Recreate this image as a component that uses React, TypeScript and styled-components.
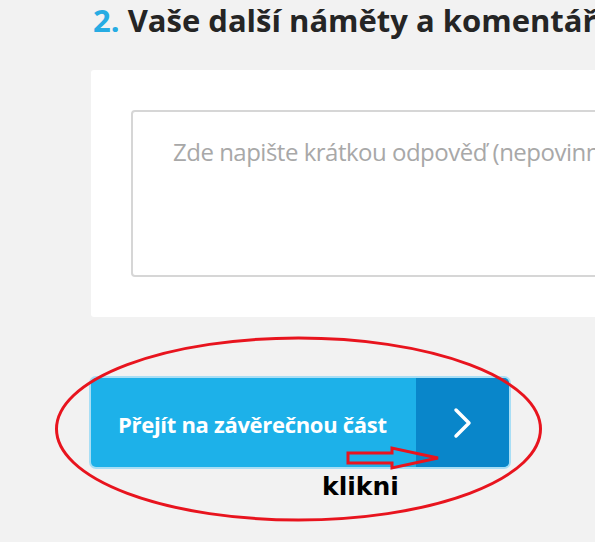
import React from "react";
import styled, { createGlobalStyle } from "styled-components";

const Global = createGlobalStyle`
  html, body { margin: 0; padding: 0; background: #f2f2f2; }
  body { overflow: hidden; }
`;

const Page = styled.div`
  position: relative;
  width: 595px;
  height: 542px;
  overflow: hidden;
  background: #f2f2f2;
  font-family: "Open Sans", "Noto Sans", sans-serif;
`;

const Content = styled.div`
  display: flex;
  flex-direction: column;
  align-items: flex-start;
  padding-left: 91px;
`;

const Heading = styled.h2`
  margin: 0 0 30px 2px;
  font-size: 31px;
  line-height: 40px;
  font-weight: 700;
  color: #252525;
  white-space: nowrap;
`;

const Num = styled.span`
  color: #27ace3;
`;

const Card = styled.div`
  box-sizing: border-box;
  width: 560px;
  height: 247px;
  padding: 40px;
  background: #ffffff;
  border-radius: 3px;
`;

const Answer = styled.textarea`
  box-sizing: border-box;
  display: block;
  width: 100%;
  height: 167px;
  padding: 24px 40px;
  border: 2px solid #d6d6d6;
  border-radius: 4px;
  resize: none;
  font-family: "Open Sans", "Noto Sans", sans-serif;
  font-size: 24px;
  line-height: 32px;
  letter-spacing: -0.5px;
  color: #333;
  outline: none;
  white-space: nowrap;
  overflow: hidden;
  &::placeholder {
    color: #a8a8a8;
  }
`;

const NextButton = styled.button`
  margin-top: 61px;
  display: flex;
  align-items: stretch;
  width: 418px;
  height: 89px;
  padding: 0;
  border: none;
  border-radius: 5px;
  overflow: hidden;
  background: #1db1e9;
  box-shadow: 0 0 0 2px #a8def5;
  cursor: pointer;
`;

const Label = styled.span`
  flex: 1;
  display: flex;
  align-items: center;
  padding-left: 27px;
  padding-top: 2px;
  font-family: "Open Sans", "Noto Sans", sans-serif;
  font-size: 22px;
  font-weight: 700;
  letter-spacing: -0.3px;
  color: #ffffff;
  white-space: nowrap;
`;

const IconBox = styled.span`
  width: 93px;
  display: flex;
  align-items: center;
  justify-content: center;
  background: #0986ca;
`;

const Overlay = styled.svg`
  position: absolute;
  left: 0;
  top: 0;
  pointer-events: none;
`;

const Note = styled.span`
  position: absolute;
  left: 322px;
  top: 472px;
  font-family: "DejaVu Sans", Verdana, sans-serif;
  font-weight: 700;
  font-size: 25px;
  line-height: 30px;
  color: #000;
`;

export default function App() {
  return (
    <>
      <Global />
      <Page>
        <Content>
          <Heading>
            <Num>2.</Num> Vaše další náměty a komentáře
          </Heading>
          <Card>
            <Answer placeholder="Zde napište krátkou odpověď (nepovinné)" />
          </Card>
          <NextButton>
            <Label>Přejít na závěrečnou část</Label>
            <IconBox>
              <svg width="20" height="32" viewBox="0 0 20 32">
                <polyline
                  points="3,3 16,16 3,29"
                  fill="none"
                  stroke="#ffffff"
                  strokeWidth="3.5"
                  strokeLinecap="round"
                  strokeLinejoin="round"
                />
              </svg>
            </IconBox>
          </NextButton>
        </Content>
        <Overlay width="595" height="542" viewBox="0 0 595 542">
          <ellipse
            cx="298.5"
            cy="429"
            rx="242"
            ry="91"
            fill="none"
            stroke="#e8141e"
            strokeWidth="3"
          />
          <polygon
            points="348,453 392,453 392,448 438,458 392,468 392,463 348,463"
            fill="none"
            stroke="#e8141e"
            strokeWidth="3"
          />
        </Overlay>
        <Note>klikni</Note>
      </Page>
    </>
  );
}
